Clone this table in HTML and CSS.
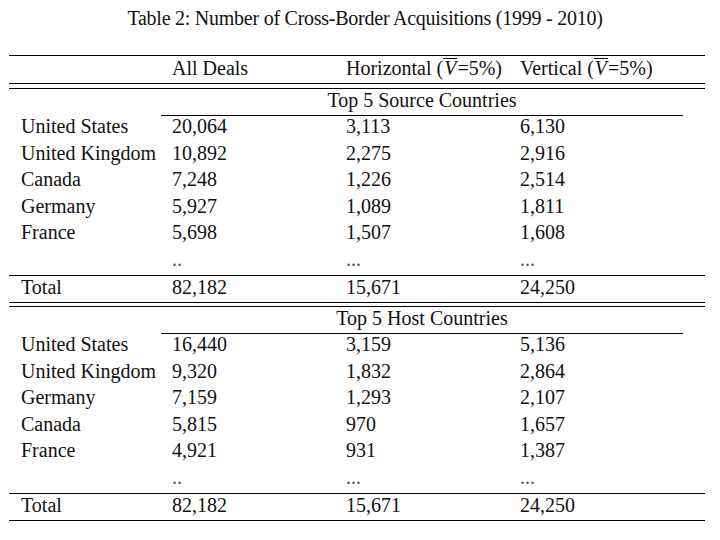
FILE: index.html
```html
<!DOCTYPE html>
<html>
<head>
<meta charset="utf-8">
<link rel="stylesheet" href="styles.css">
</head>
<body>
<div class="page">
  <div class="title">Table 2: Number of Cross-Border Acquisitions (1999 - 2010)</div>
  <div class="table">
    <div class="rule"></div>
    <div class="row head">
      <div class="c1"></div>
      <div>All Deals</div>
      <div>Horizontal (<span class="vbar"><i>V</i></span>=5%)</div>
      <div>Vertical (<span class="vbar"><i>V</i></span>=5%)</div>
    </div>
    <div class="rule"></div>
    <div class="rule gap4"></div>
    <div class="section">Top 5 Source Countries</div>
    <div class="cmid"></div>
    <div class="row"><div class="c1">United States</div><div>20,064</div><div>3,113</div><div>6,130</div></div>
    <div class="row"><div class="c1">United Kingdom</div><div>10,892</div><div>2,275</div><div>2,916</div></div>
    <div class="row"><div class="c1">Canada</div><div>7,248</div><div>1,226</div><div>2,514</div></div>
    <div class="row"><div class="c1">Germany</div><div>5,927</div><div>1,089</div><div>1,811</div></div>
    <div class="row"><div class="c1">France</div><div>5,698</div><div>1,507</div><div>1,608</div></div>
    <div class="row dots"><div class="c1"></div><div>..</div><div>...</div><div>...</div></div>
    <div class="rule"></div>
    <div class="row total"><div class="c1">Total</div><div>82,182</div><div>15,671</div><div>24,250</div></div>
    <div class="rule"></div>
    <div class="rule gap3"></div>
    <div class="section">Top 5 Host Countries</div>
    <div class="cmid"></div>
    <div class="row"><div class="c1">United States</div><div>16,440</div><div>3,159</div><div>5,136</div></div>
    <div class="row"><div class="c1">United Kingdom</div><div>9,320</div><div>1,832</div><div>2,864</div></div>
    <div class="row"><div class="c1">Germany</div><div>7,159</div><div>1,293</div><div>2,107</div></div>
    <div class="row"><div class="c1">Canada</div><div>5,815</div><div>970</div><div>1,657</div></div>
    <div class="row"><div class="c1">France</div><div>4,921</div><div>931</div><div>1,387</div></div>
    <div class="row dots"><div class="c1"></div><div>..</div><div>...</div><div>...</div></div>
    <div class="rule"></div>
    <div class="row total"><div class="c1">Total</div><div>82,182</div><div>15,671</div><div>24,250</div></div>
    <div class="rule"></div>
  </div>
</div>
</body>
</html>
```

FILE: styles.css
```css
html, body {
  margin: 0;
  padding: 0;
  background: #ffffff;
}
body {
  font-family: "Liberation Serif", "Times New Roman", serif;
  font-size: 20px;
  color: #111111;
  width: 720px;
  height: 540px;
  overflow: hidden;
}
.page {
  padding-top: 0;
}
.title {
  height: 38px;
  line-height: 36px;
  margin-bottom: 17px;
  padding-left: 10px;
  text-align: center;
  white-space: nowrap;
  letter-spacing: -0.25px;
}
.table {
  margin-left: 9px;
  width: 696px;
}
.rule {
  height: 0;
  border-top: 1px solid #000;
}
.rule.gap4 {
  margin-top: 4px;
}
.rule.gap3 {
  margin-top: 3px;
}
.cmid {
  height: 0;
  margin-left: 152px;
  width: 522px;
  border-top: 1px solid #000;
}
.row {
  display: grid;
  grid-template-columns: 163px 174px 174px 1fr;
  height: 26.5px;
  line-height: 21px;
  white-space: nowrap;
}
.row .c1 {
  padding-left: 12px;
}
.row.head {
  height: 27px;
  padding-top: 2px;
  box-sizing: border-box;
}
.row.total {
  height: 26px;
  padding-top: 1px;
  box-sizing: border-box;
}
.row.dots {
  color: #555;
}
.section {
  height: 26px;
  margin-left: 152px;
  width: 522px;
  text-align: center;
  line-height: 21px;
  padding-top: 1px;
  box-sizing: border-box;
}
.vbar {
  display: inline-block;
  border-top: 1px solid #111;
  line-height: 18px;
  padding: 0 1px;
}
```
